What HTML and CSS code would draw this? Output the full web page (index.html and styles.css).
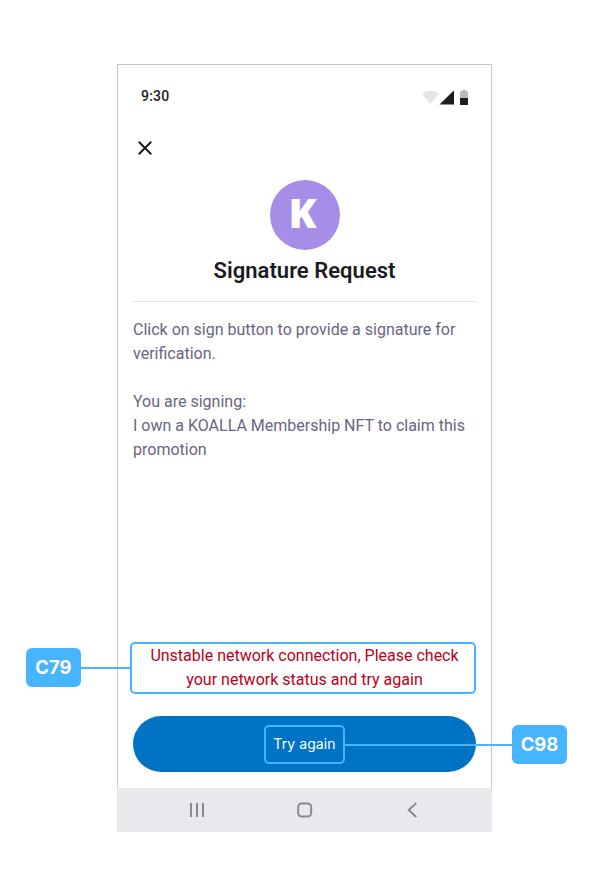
FILE: index.html
```
<!DOCTYPE html>
<html lang="en">
<head>
<meta charset="utf-8">
<title>Signature Request</title>
<link rel="stylesheet" href="styles.css">
</head>
<body>
<main class="phone">
  <div class="screen">
    <header class="status">
      <span class="time">9:30</span>
      <svg class="status-icons" width="48" height="16" viewBox="0 0 48 16">
        <path d="M.8 3.5Q9 -2.5 18 3.5L9.4 14Z" fill="#e6e6e6"/>
        <path d="M18.5 14.5L33 .2V14.5Z" fill="#1d1b20"/>
        <path d="M39 8V1.8Q39 1 40 1H41V0H45V1H46Q47 1 47 1.8V8Z" fill="#b9b9b9"/>
        <path d="M39 8H47V15H39Z" fill="#1d1b20"/>
      </svg>
    </header>
    <div class="close">
      <svg width="14" height="14" viewBox="0 0 14 14"><path d="M.8.8L13.2 13.2M13.2.8L.8 13.2" stroke="#1b1b1f" stroke-width="2" fill="none"/></svg>
    </div>
    <section class="intro">
      <div class="avatar"><span>K</span></div>
      <h1>Signature Request</h1>
    </section>
    <section class="message">
      <p>Click on sign button to provide a signature for<br>verification.</p>
      <p>You are signing:<br>I own a KOALLA Membership NFT to claim this<br>promotion</p>
    </section>
    <div class="error">Unstable network connection, Please check<br>your network status and try again
      <span class="line line-left"></span><span class="tag tag-left">C79</span>
    </div>
    <div class="button">
      <div class="callout"><span class="label">Try again</span>
        <span class="line line-right"></span><span class="tag tag-right">C98</span>
      </div>
    </div>
  </div>
  <nav class="navbar">
    <svg width="16" height="16" viewBox="0 0 16 16"><path d="M2 1V15M8 1V15M14 1V15" stroke="#8b8b8b" stroke-width="2"/></svg>
    <svg width="16" height="16" viewBox="0 0 16 16"><rect x="1.2" y="1.5" width="13" height="13" rx="3.5" fill="none" stroke="#8b8b8b" stroke-width="2"/></svg>
    <svg width="16" height="16" viewBox="0 0 16 16"><path d="M12.3 1L4.7 8L12.3 15" fill="none" stroke="#8b8b8b" stroke-width="2"/></svg>
  </nav>
</main>
</body>
</html>
```
FILE: styles.css
```
* { box-sizing: border-box; }
body {
  margin: 0;
  padding: 64px 0 0 117px;
  background: #fff;
  font-family: Roboto, sans-serif;
}
.phone { width: 375px; }
.screen {
  height: 724px;
  padding: 0 15px;
  border: 1px solid #c7c7c7;
  border-bottom: 0;
  display: flex;
  flex-direction: column;
}
.status {
  display: flex;
  justify-content: space-between;
  align-items: center;
  height: 20px;
  margin: 21px 7px 0 8px;
}
.time { font-size: 14px; font-weight: 500; letter-spacing: .2px; color: #1d1b20; }
.status-icons { margin-top: 4px; }
.close { margin: 35px 0 0 5px; height: 14px; display: flex; }
.intro {
  display: flex;
  flex-direction: column;
  align-items: center;
  height: 122px;
  margin-top: 25px;
  border-bottom: 1px solid #e3e3e8;
}
.avatar {
  display: flex;
  justify-content: center;
  align-items: center;
  width: 70px;
  height: 70px;
  padding: 0 4px 6px 0;
  border-radius: 50%;
  background: #a78de8;
  color: #fff;
  font: 900 41px/56px "Noto Sans", sans-serif;
}
h1 {
  margin: 7px 0 0;
  font-size: 22px;
  line-height: 28px;
  font-weight: 600;
  letter-spacing: .03px;
  color: #1b1b1f;
}
.message {
  margin-top: 16px;
  font-size: 16px;
  line-height: 24px;
  color: #6a6580;
  white-space: nowrap;
}
.message p { margin: 0 0 24px; }
.error {
  position: relative;
  width: 346px;
  height: 52px;
  margin: auto 0 22px -3px;
  border: 2px solid #47b4ff;
  border-radius: 5px;
  font-size: 16px;
  line-height: 24px;
  padding-left: 3px;
  text-align: center;
  color: #b90020;
}
.button {
  display: flex;
  justify-content: center;
  align-items: center;
  height: 56px;
  margin-bottom: 16px;
  flex-shrink: 0;
  border-radius: 28px;
  background: #0073c4;
}
.callout {
  position: relative;
  display: flex;
  justify-content: center;
  align-items: center;
  width: 81px;
  height: 39px;
  border: 2px solid #47b4ff;
  border-radius: 5px;
  color: #fff;
  font: 400 14px/20px Inter, sans-serif;
  letter-spacing: .1px;
}
.line { position: absolute; height: 2px; background: #47b4ff; }
.line-left { right: 100%; top: 23px; width: 51px; }
.line-right { left: 100%; top: 17px; width: 169px; }
.tag {
  position: absolute;
  width: 55px;
  height: 39px;
  border-radius: 6px;
  background: #47b4ff;
  color: #fff;
  font: 700 18.5px/39px Inter, sans-serif;
  letter-spacing: 0;
  text-align: center;
}
.tag-left { right: 393px; top: 4.4px; }
.tag-right { left: 246px; top: -2px; }
.navbar {
  display: flex;
  justify-content: space-between;
  align-items: center;
  height: 44px;
  padding: 0 72px;
  background: #e8e9ed;
}
```
